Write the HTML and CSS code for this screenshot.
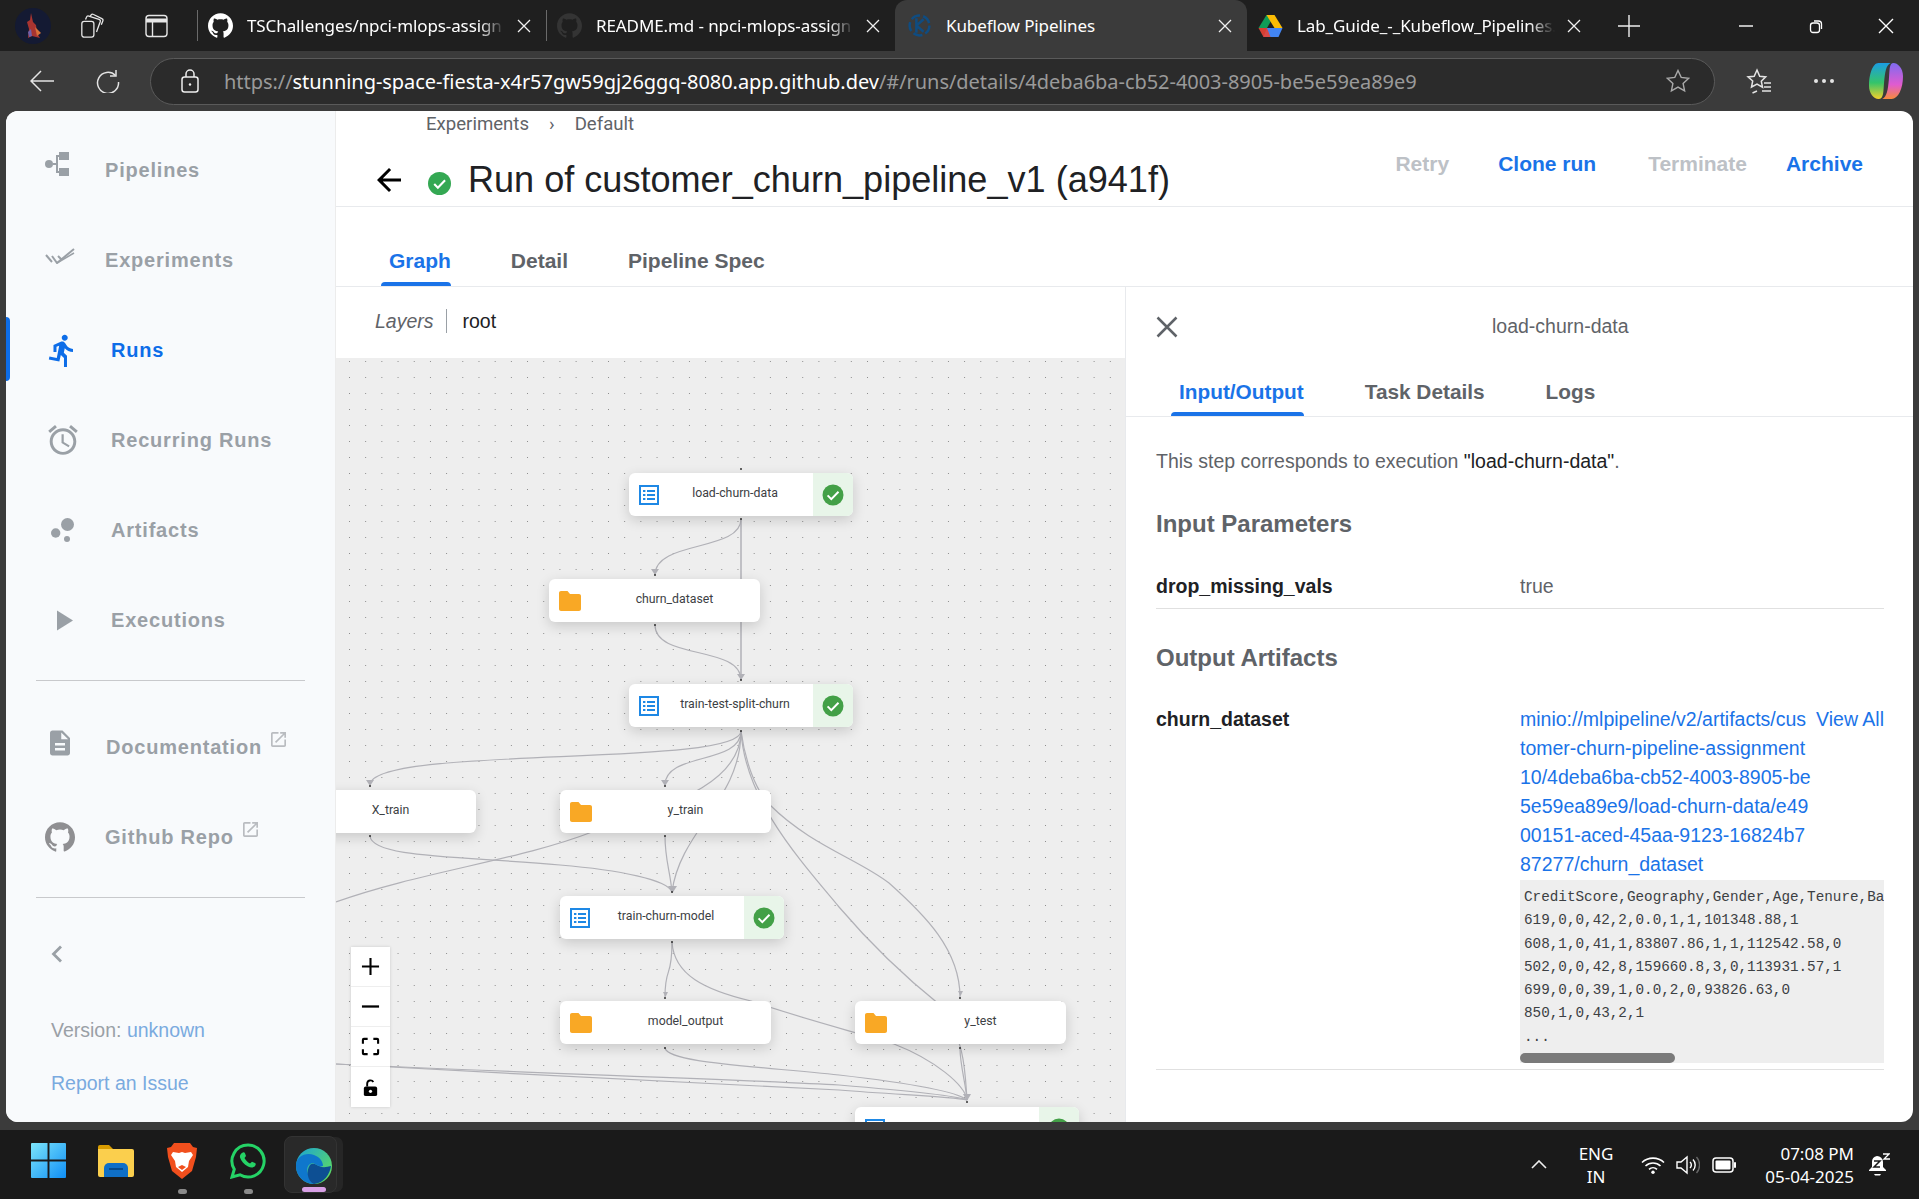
FILE: index.html
```html
<!DOCTYPE html>
<html lang="en">
<head>
<meta charset="utf-8">
<title>Kubeflow Pipelines</title>
<link rel="stylesheet" href="styles.css">
</head>
<body>
<svg class="defs" width="0" height="0" aria-hidden="true">
  <defs>
    <symbol id="i-github" viewBox="0 0 24 24"><path d="M12 .297c-6.63 0-12 5.373-12 12 0 5.303 3.438 9.8 8.205 11.385.6.113.82-.258.82-.577 0-.285-.01-1.04-.015-2.04-3.338.724-4.042-1.61-4.042-1.61C4.422 18.07 3.633 17.7 3.633 17.7c-1.087-.744.084-.729.084-.729 1.205.084 1.838 1.236 1.838 1.236 1.07 1.835 2.809 1.305 3.495.998.108-.776.417-1.305.76-1.605-2.665-.3-5.466-1.332-5.466-5.93 0-1.31.465-2.38 1.235-3.22-.135-.303-.54-1.523.105-3.176 0 0 1.005-.322 3.3 1.23.96-.267 1.98-.399 3-.405 1.02.006 2.04.138 3 .405 2.28-1.552 3.285-1.23 3.285-1.23.645 1.653.24 2.873.12 3.176.765.84 1.23 1.91 1.23 3.22 0 4.61-2.805 5.625-5.475 5.92.42.36.81 1.096.81 2.22 0 1.606-.015 2.896-.015 3.286 0 .315.21.69.825.57C20.565 22.092 24 17.592 24 12.297c0-6.627-5.373-12-12-12"/></symbol>
    <symbol id="i-x" viewBox="0 0 14 14"><path d="M1 1l12 12M13 1L1 13" fill="none" stroke="currentColor" stroke-width="1.3"/></symbol>
    <symbol id="i-ext" viewBox="3 3 18 18"><path d="M19 19H5V5h7V3H5c-1.11 0-2 .9-2 2v14c0 1.1.89 2 2 2h14c1.1 0 2-.9 2-2v-7h-2v7zM14 3v2h3.59l-9.83 9.83 1.41 1.41L19 6.41V10h2V3h-7z"/></symbol>
    <symbol id="i-check" viewBox="0 0 24 24"><circle cx="12" cy="12" r="10.5" fill="#43a047"/><path d="M6.6 12.4l3.7 3.7 7.2-7.4" fill="none" stroke="#fff" stroke-width="2"/></symbol>
    <symbol id="i-list" viewBox="0 0 20 20"><rect width="20" height="20" fill="#1e88e5"/><rect x="2" y="2" width="16" height="16" fill="#fff"/><path d="M4 5h2.4v2H4zM8 5h8v2H8zM4 9h2.4v2H4zM8 9h8v2H8zM4 13h2.4v2H4zM8 13h8v2H8z" fill="#1e88e5"/></symbol>
    <symbol id="i-folder" viewBox="0 0 22 20"><path d="M8.5 0H2C.9 0 0 .9 0 2v16c0 1.1.9 2 2 2h18c1.1 0 2-.9 2-2V5c0-1.1-.9-2-2-2h-9z" fill="#f9a825"/></symbol>
  </defs>
</svg>

<header class="tabstrip">
  <svg class="avatar" viewBox="0 0 36 36"><circle cx="18" cy="18" r="18" fill="#141a33"/><path d="M16 5l2 9 3 3 1 8 3 5-8-2-4 2 1-9-2-7 3-2z" fill="#a83430"/><path d="M20 19l6 6-4 3z" fill="#d8703a"/><path d="M13 24l3-3 1 7-3 1z" fill="#6f5fa8"/></svg>
  <svg class="tool workspaces" viewBox="0 0 25 28" fill="none" stroke="#e6e6e6" stroke-width="1.4"><rect x="1" y="9" width="13" height="17" rx="2.5"/><path d="M5 7l1-2.5a2 2 0 0 1 2.5-1.2l11 3.6a2 2 0 0 1 1.3 2.5l-4 11"/><path d="M10 3.5l1-1.4a2 2 0 0 1 2.6-.5l9 4.5a2 2 0 0 1 1 2.6l-1.6 4"/></svg>
  <svg class="tool vtabs" viewBox="0 0 23 24" fill="none" stroke="#e6e6e6" stroke-width="1.4"><rect x="1" y="1.5" width="21" height="21" rx="3"/><path d="M1 6.5h21" stroke-width="4"/><path d="M7.5 8v14"/></svg>
  <div class="tab tab-first">
    <svg class="tab-ico ico-white"><use href="#i-github"/></svg>
    <span class="tab-title">TSChallenges/npci-mlops-assign</span>
    <svg class="tab-x"><use href="#i-x"/></svg>
  </div>
  <div class="tab">
    <svg class="tab-ico ico-dim"><use href="#i-github"/></svg>
    <span class="tab-title">README.md - npci-mlops-assign</span>
    <svg class="tab-x"><use href="#i-x"/></svg>
  </div>
  <div class="tab tab-active">
    <svg class="tab-ico" viewBox="0 0 24 24" fill="none" stroke="#0f4c81" stroke-width="2.400"><circle cx="12" cy="12" r="9.500" stroke-dasharray="9 3"/><path d="M9 5v14M9 12l7-6M9 12l7 6"/></svg>
    <span class="tab-title tab-title-plain">Kubeflow Pipelines</span>
    <svg class="tab-x"><use href="#i-x"/></svg>
  </div>
  <div class="tab">
    <svg class="tab-ico drive" viewBox="0 0 24 22"><path d="M8 0h8L8.5 13H0z" fill="#0f9d58"/><path d="M8 0h8l8 13h-8z" fill="#fbbc04"/><path d="M5 22l3.5-9H24l-4 9z" fill="#4285f4"/><path d="M0 13h8.5L12 22H5z" fill="#ea4335" opacity=".9"/></svg>
    <span class="tab-title">Lab_Guide_-_Kubeflow_Pipelines.</span>
    <svg class="tab-x"><use href="#i-x"/></svg>
  </div>
  <svg class="newtab" viewBox="0 0 22 22"><path d="M11 0v22M0 11h22" stroke="#eee" stroke-width="1.4"/></svg>
  <div class="winctl">
    <svg viewBox="0 0 16 16"><path d="M1 8h14" stroke="#fff" stroke-width="1.4"/></svg>
    <svg viewBox="0 0 16 16" fill="none" stroke="#fff" stroke-width="1.3"><rect x="2.5" y="5" width="9" height="9.5" rx="2.5"/><path d="M6 3h4.5a3 3 0 0 1 3 3v5"/></svg>
    <svg viewBox="0 0 16 16"><path d="M1 1l14 14M15 1L1 15" stroke="#fff" stroke-width="1.4"/></svg>
  </div>
</header>

<nav class="toolbar">
  <svg class="tb-back" viewBox="0 0 24 22" fill="none" stroke="#e4e4e4" stroke-width="1.5"><path d="M24 11H1M11 1L1 11l10 10"/></svg>
  <svg class="tb-reload" viewBox="0 0 24 24" fill="none" stroke="#e4e4e4" stroke-width="1.5"><path d="M19.5 6.5A10.5 10.5 0 1 0 22.5 13"/><path d="M20 1v6h-6"/></svg>
  <div class="urlbar">
    <svg class="lock" viewBox="0 0 18 24" fill="none" stroke="#eee" stroke-width="1.5"><rect x="1" y="8" width="16" height="15" rx="2.5"/><path d="M5 8V5a4 4 0 0 1 8 0v3"/><circle cx="9" cy="15.5" r="1.2" fill="#eee" stroke="none"/></svg>
    <span class="url"><span class="url-dim">https://</span><span class="url-host">stunning-space-fiesta-x4r57gw59gj26ggq-8080.app.github.dev</span><span class="url-dim">/#/runs/details/4deba6ba-cb52-4003-8905-be5e59ea89e9</span></span>
    <svg class="star" viewBox="0 0 24 24" fill="none" stroke="#aaa" stroke-width="1.4"><path d="M12 1.5l3.2 6.9 7.5.9-5.6 5.1 1.5 7.4L12 18.1l-6.6 3.7 1.5-7.4L1.3 9.3l7.5-.9z"/></svg>
  </div>
  <svg class="tb-fav" viewBox="0 0 26 26" fill="none" stroke="#e4e4e4" stroke-width="1.5"><path d="M11 2l2.7 6.2 6 .7-4.4 4.3 1.2 6-5.5-3.2L5.500 19l1.200-6L2 8.900l6.200-.7zM11 23l-4.500 2"/><path d="M18 15h7M18 19h7M16 23h9"/></svg>
  <div class="tb-dots"><i></i><i></i><i></i></div>
  <svg class="copilot" viewBox="0 0 36 40">
    <defs><linearGradient id="cpa" x1="0" y1="0" x2="0" y2="1"><stop offset="0" stop-color="#1b9de2"/><stop offset=".55" stop-color="#35c46a"/><stop offset="1" stop-color="#f4d02b"/></linearGradient><linearGradient id="cpb" x1="0" y1="0" x2="0" y2="1"><stop offset="0" stop-color="#7f6bf0"/><stop offset=".6" stop-color="#e05bd0"/><stop offset="1" stop-color="#f78a3c"/></linearGradient></defs>
    <path d="M26 1c4 0 10 5 10 14 0 13-5 24-12 24H14c5-2 6-10 7-20 1-10 0-18 5-18z" fill="url(#cpb)"/>
    <path d="M10 1h13c-5 2-6 10-7 20-1 10 0 18-6 18C5 39 0 33 0 25 0 13 4 1 10 1z" fill="url(#cpa)"/>
  </svg>
</nav>

<div class="viewport">
  <aside class="sidebar">
    <a class="nav nav-a">
      <svg class="ni ni-pipe" viewBox="0 0 24 24"><circle cx="4" cy="12" r="4"/><path d="M14 0h10v8H14zM14 16h10v8H14zM8 11h3V3h3v2h-1v6h0v2h0v6h1v2h-3v-8H8z"/></svg>
      <span>Pipelines</span>
    </a>
    <a class="nav nav-a">
      <svg class="ni ni-exp" viewBox="0 0 30 16" fill="none" stroke="currentColor" stroke-width="2"><path d="M1 7l6 7M7 8l5 7L29 1M13 8l3 3"/><path d="M12 15L29 5" stroke-width="1.5"/></svg>
      <span>Experiments</span>
    </a>
    <a class="nav nav-b nav-active">
      <svg class="ni ni-run" viewBox="3 1 16 22"><path d="M13.49 5.48c1.1 0 2-.9 2-2s-.9-2-2-2-2 .9-2 2 .9 2 2 2zm-3.600 13.900l1-4.400 2.100 2v6h2v-7.500l-2.100-2 .6-3c1.300 1.500 3.300 2.500 5.500 2.500v-2c-1.900 0-3.500-1-4.300-2.400l-1-1.600c-.4-.6-1-1-1.700-1-.3 0-.5.1-.8.1l-5.200 2.200v4.700h2v-3.400l1.800-.7-1.600 8.100-4.900-1-.4 2 7 1.400z"/></svg>
      <span>Runs</span>
    </a>
    <a class="nav nav-b">
      <svg class="ni ni-alarm" viewBox="2 1.800 20 20.300"><path d="M22 5.720l-4.600-3.860-1.290 1.530 4.600 3.860L22 5.720zM7.880 3.390L6.600 1.860 2 5.710l1.290 1.530 4.590-3.850zM12.500 8H11v6l4.750 2.850.75-1.230-4-2.370V8zM12 4c-4.970 0-9 4.030-9 9s4.020 9 9 9c4.970 0 9-4.030 9-9s-4.030-9-9-9zm0 16c-3.870 0-7-3.130-7-7s3.130-7 7-7 7 3.130 7 7-3.130 7-7 7z"/></svg>
      <span>Recurring Runs</span>
    </a>
    <a class="nav nav-b">
      <svg class="ni ni-art" viewBox="0 0 24 24"><circle cx="16.500" cy="6.500" r="6.500"/><circle cx="4.700" cy="15" r="4.700"/><circle cx="16" cy="21" r="3"/></svg>
      <span>Artifacts</span>
    </a>
    <a class="nav nav-b">
      <svg class="ni ni-exec" viewBox="0 0 16 20"><path d="M0 0l16 10L0 20z"/></svg>
      <span>Executions</span>
    </a>
    <hr class="side-rule">
    <a class="nav nav-a nav-doc">
      <svg class="ni ni-doc" viewBox="4 2 16 20"><path d="M14 2H6c-1.100 0-1.990.9-1.990 2L4 20c0 1.100.89 2 1.990 2H18c1.100 0 2-.9 2-2V8l-6-6zm2 16H8v-2h8v2zm0-4H8v-2h8v2zm-3-5V3.500L18.500 9H13z"/></svg>
      <span>Documentation</span>
      <svg class="ext"><use href="#i-ext"/></svg>
    </a>
    <a class="nav nav-a">
      <svg class="ni ni-gh"><use href="#i-github"/></svg>
      <span>Github Repo</span>
      <svg class="ext"><use href="#i-ext"/></svg>
    </a>
    <hr class="side-rule side-rule-2">
    <svg class="collapse" viewBox="0 0 11 18" fill="none" stroke="#9aa0a6" stroke-width="2.800"><path d="M10 1.500L2.500 9l7.500 7.500"/></svg>
    <p class="version">Version: <a>unknown</a></p>
    <p class="report"><a>Report an Issue</a></p>
  </aside>

  <main class="main">
    <div class="crumbs"><span>Experiments</span><span class="crumb-sep">›</span><span>Default</span></div>
    <div class="titlebar">
      <svg class="back" viewBox="0 0 24 24"><path d="M20 11H7.830l5.590-5.590L12 4l-8 8 8 8 1.410-1.410L7.830 13H20v-2z"/></svg>
      <svg class="title-check" viewBox="0 0 24 24"><circle cx="12" cy="12" r="12" fill="#34a853"/><path d="M6.500 12.500l3.800 3.800 7.500-7.800" fill="none" stroke="#fff" stroke-width="2.200"/></svg>
      <h1>Run of customer_churn_pipeline_v1 (a941f)</h1>
      <div class="actions">
        <button class="act act-off act-retry">Retry</button>
        <button class="act act-on act-clone">Clone run</button>
        <button class="act act-off act-term">Terminate</button>
        <button class="act act-on act-arch">Archive</button>
      </div>
    </div>
    <div class="tabs tabs-main">
      <span class="t t-on">Graph</span>
      <span class="t">Detail</span>
      <span class="t">Pipeline Spec</span>
    </div>
    <div class="panes">
      <section class="left">
        <div class="layers"><em>Layers</em><i class="layers-sep"></i><span>root</span></div>
        <div class="canvas">
          <svg class="edges" viewBox="336 358 789 764" fill="none" stroke="#b1b1b7" stroke-width="1.200">
            <path d="M741 519V680" stroke-width="1.500"/>
            <path d="M741 519C741 552 655 540 655 575"/>
            <path d="M655 625C655 660 741 645 741 680"/>
            <path d="M741 731C741 768 370 745 370 785"/>
            <path d="M741 731C741 765 665 752 665 785"/>
            <path d="M741 731C741 790 650 810 592 832C520 860 420 872 336 902"/>
            <path d="M741 731C741 800 680 830 672 892"/>
            <path d="M665 836C665 860 670 870 672 892"/>
            <path d="M370 836C372 858 460 856 560 865C620 870 668 880 672 892"/>
            <path d="M741 731C745 800 800 860 839 907C880 955 915 985 940 1005C965 1040 965 1070 967 1100"/>
            <path d="M741 731C745 760 755 790 770 805C810 845 860 860 889 883C925 915 960 950 960 997"/>
            <path d="M672 942C672 980 665 965 665 997"/>
            <path d="M672 942C674 975 705 990 751 1001C800 1018 855 1032 894 1044C935 1060 965 1085 967 1100"/>
            <path d="M665 1048C668 1062 740 1065 839 1075C900 1082 955 1090 967 1100"/>
            <path d="M960 1048C960 1065 966 1085 967 1100"/>
            <path d="M336 1064C500 1072 760 1080 839 1085C900 1090 955 1095 967 1100"/>
            <path d="M336 1064C500 1074 760 1085 839 1090C900 1095 950 1096 967 1100"/>
            <g class="arrows" fill="#b1b1b7" stroke="none">
              <path d="M737 674h8l-4 6z"/><path d="M651 569h8l-4 6z"/><path d="M366 780h8l-4 6z"/><path d="M661 780h8l-4 6z"/><path d="M668 886h9l-4.500 7z"/><path d="M663 992h5l-2.500 5z"/><path d="M958 991h5l-2.500 5z"/><path d="M963 1094h8l-4 7z"/>
            </g>
            <g class="ends" fill="#333" stroke="none">
              <circle cx="741" cy="469" r="1"/><circle cx="741" cy="519" r="1"/><circle cx="655" cy="575" r="1"/><circle cx="655" cy="625" r="1"/><circle cx="741" cy="680" r="1"/><circle cx="741" cy="731" r="1"/><circle cx="370" cy="786" r="1"/><circle cx="665" cy="786" r="1"/><circle cx="370" cy="836" r="1"/><circle cx="665" cy="836" r="1"/><circle cx="672" cy="892" r="1"/><circle cx="672" cy="942" r="1"/><circle cx="665" cy="998" r="1"/><circle cx="960" cy="998" r="1"/><circle cx="665" cy="1048" r="1"/><circle cx="960" cy="1048" r="1"/><circle cx="967" cy="1102" r="1"/>
            </g>
          </svg>

          <div class="node exec n-load"><svg class="nico"><use href="#i-list"/></svg><span class="nlabel">load-churn-data</span><span class="nstat"><svg><use href="#i-check"/></svg></span></div>
          <div class="node art n-dataset"><svg class="nico"><use href="#i-folder"/></svg><span class="nlabel">churn_dataset</span></div>
          <div class="node exec n-split"><svg class="nico"><use href="#i-list"/></svg><span class="nlabel">train-test-split-churn</span><span class="nstat"><svg><use href="#i-check"/></svg></span></div>
          <div class="node art n-xtrain"><svg class="nico"><use href="#i-folder"/></svg><span class="nlabel">X_train</span></div>
          <div class="node art n-ytrain"><svg class="nico"><use href="#i-folder"/></svg><span class="nlabel">y_train</span></div>
          <div class="node exec n-train"><svg class="nico"><use href="#i-list"/></svg><span class="nlabel">train-churn-model</span><span class="nstat"><svg><use href="#i-check"/></svg></span></div>
          <div class="node art n-model"><svg class="nico"><use href="#i-folder"/></svg><span class="nlabel">model_output</span></div>
          <div class="node art n-ytest"><svg class="nico"><use href="#i-folder"/></svg><span class="nlabel">y_test</span></div>
          <div class="node exec n-last"><svg class="nico"><use href="#i-list"/></svg><span class="nlabel"></span><span class="nstat"><svg><use href="#i-check"/></svg></span></div>

          <div class="zoomctl">
            <button><svg viewBox="0 0 20 20"><path d="M10 1v18M1 10h18" stroke="#000" stroke-width="2.200"/></svg></button>
            <button><svg viewBox="0 0 20 20"><path d="M1 10h18" stroke="#000" stroke-width="2.400"/></svg></button>
            <button><svg viewBox="0 0 20 20" fill="none" stroke="#000" stroke-width="2.200"><path d="M2 7V3a1 1 0 0 1 1-1h4M13 2h4a1 1 0 0 1 1 1v4M18 13v4a1 1 0 0 1-1 1h-4M7 18H3a1 1 0 0 1-1-1v-4"/></svg></button>
            <button><svg viewBox="0 0 20 20"><path d="M5 9h10a2 2 0 0 1 2 2v6a2 2 0 0 1-2 2H5a2 2 0 0 1-2-2v-6a2 2 0 0 1 2-2z"/><path d="M6.500 9V6a3.500 3.500 0 0 1 6.500-1.800" fill="none" stroke="#000" stroke-width="2"/><circle cx="10" cy="14" r="1.700" fill="#fff"/></svg></button>
          </div>
        </div>
      </section>

      <section class="side">
        <div class="side-head">
          <svg class="side-close" viewBox="0 0 22 22"><path d="M1.500 1.500l19 19M20.500 1.500l-19 19" stroke="#5f6368" stroke-width="2.500"/></svg>
          <span class="side-title">load-churn-data</span>
        </div>
        <div class="tabs tabs-side">
          <span class="t t-on">Input/Output</span>
          <span class="t">Task Details</span>
          <span class="t">Logs</span>
        </div>
        <div class="side-body">
          <p class="lead">This step corresponds to execution <b>"load-churn-data"</b>.</p>
          <h2 class="h-in">Input Parameters</h2>
          <div class="kv kv-in"><strong>drop_missing_vals</strong><span class="v">true</span></div>
          <h2 class="h-out">Output Artifacts</h2>
          <div class="kv kv-out">
            <strong>churn_dataset</strong>
            <div class="artifact">
              <div class="link-row">
                <a class="uri">minio://mlpipeline/v2/artifacts/cus<br>tomer-churn-pipeline-assignment<br>10/4deba6ba-cb52-4003-8905-be<br>5e59ea89e9/load-churn-data/e49<br>00151-aced-45aa-9123-16824b7<br>87277/churn_dataset</a>
                <a class="viewall">View All</a>
              </div>
              <div class="preview">
                <pre>CreditScore,Geography,Gender,Age,Tenure,Ba
619,0,0,42,2,0.0,1,1,101348.88,1
608,1,0,41,1,83807.86,1,1,112542.58,0
502,0,0,42,8,159660.8,3,0,113931.57,1
699,0,0,39,1,0.0,2,0,93826.63,0
850,1,0,43,2,1
...</pre>
                <i class="thumb"></i>
              </div>
            </div>
          </div>
        </div>
      </section>
    </div>
  </main>
</div>

<footer class="taskbar">
  <svg class="tk tk-win" viewBox="0 0 36 36">
    <defs><linearGradient id="wg" x1="0" y1="0" x2="1" y2="1"><stop offset="0" stop-color="#7ce6fb"/><stop offset="1" stop-color="#0f8ef5"/></linearGradient></defs>
    <path d="M1 0h16v17H0V1a1 1 0 0 1 1-1zM19 0h16a1 1 0 0 1 1 1v16H19zM0 19h17v17H1a1 1 0 0 1-1-1zM19 19h17v16a1 1 0 0 1-1 1H19z" fill="url(#wg)"/>
  </svg>
  <svg class="tk tk-folder" viewBox="0 0 36 32">
    <path d="M0 2a2 2 0 0 1 2-2h9l4 4h-15z" fill="#d99c00"/><path d="M0 4h34a2 2 0 0 1 2 2v24a2 2 0 0 1-2 2H2a2 2 0 0 1-2-2z" fill="#fbcf4d"/><path d="M6 32V23a5 5 0 0 1 5-5h14a5 5 0 0 1 5 5v9z" fill="#0f6fc6"/><path d="M11 24h14" stroke="#063f77" stroke-width="1.500"/>
  </svg>
  <span class="tk-slot tk-brave">
    <svg viewBox="0 0 30 36"><path d="M7 0h16l3 4 4 1-1 9-4 14-10 8-10-8L1 14 0 5l4-1z" fill="#f14f1d"/><path d="M6 9l6 1 3-1 3 1 6-1 2 3-4 6-1 6-6 5-6-5-1-6-4-6z" fill="#fff"/><path d="M11 24l4-2 4 2-4 3z" fill="#f14f1d"/></svg>
    <i class="pip"></i>
  </span>
  <span class="tk-slot tk-wa">
    <svg viewBox="0 0 36 36"><path d="M18 2a16 16 0 1 1-8 29.800L2 34l2.300-7.700A16 16 0 0 1 18 2z" fill="none" stroke="#25d366" stroke-width="3"/><path d="M12 10c1-1 2.500-1 3 .2l1 2.800-1.500 2c1 2.200 3 4.200 5.500 5.500l2-1.800 3 1.300c1 .5 1 2 0 3-1.500 1.800-4 2-7 .5-4-2-7-5.500-8-9-.4-1.800.5-3.500 2-4.500z" fill="#25d366"/></svg>
    <i class="pip"></i>
  </span>
  <span class="tk-edge">
    <svg viewBox="0 0 36 36">
      <defs><linearGradient id="eg" x1="0" y1="0" x2="1" y2=".8"><stop offset="0" stop-color="#1aa3d6"/><stop offset="1" stop-color="#5fdd5f"/></linearGradient></defs>
      <circle cx="18" cy="18" r="18" fill="url(#eg)"/>
      <path d="M0 18C0 8 10 4 18 7c6 2 9 7 9 11-4 0-8-5-13-2-5 3-3 12 3 17 1 1 3 2 1 3C8 36 0 28 0 18z" fill="#0f77cc"/>
      <path d="M14 17c3-3 7 0 9 1 4 2 8 1 12 0-1 8-7 17-17 18-7-3-8-14-4-19z" fill="#0d4f93"/>
      <path d="M13 15c4-4 10-3 13 1 1 2 0 3-3 2-3-1-7-5-10-3z" fill="#0f77cc"/>
    </svg>
    <i class="pip-on"></i>
  </span>
  <div class="tray">
    <svg class="tray-up" viewBox="0 0 16 9" fill="none" stroke="#eee" stroke-width="1.600"><path d="M1 8l7-7 7 7"/></svg>
    <div class="lang"><span>ENG</span><span>IN</span></div>
    <svg class="tray-wifi" viewBox="0 0 24 18" fill="none" stroke="#fff" stroke-width="1.600"><path d="M1 6.500a16 16 0 0 1 22 0M4.500 10a11 11 0 0 1 15 0M8 13.300a6 6 0 0 1 8 0"/><circle cx="12" cy="16.300" r="1.700" fill="#fff" stroke="none"/></svg>
    <svg class="tray-vol" viewBox="0 0 24 20" fill="none" stroke="#fff" stroke-width="1.400"><path d="M1 7v6h4l6 5V2L5 7z"/><path d="M14 7a4 4 0 0 1 0 6M17 4.500a8 8 0 0 1 0 11"/><path d="M20.500 2a12 12 0 0 1 0 16" stroke="#666"/></svg>
    <svg class="tray-bat" viewBox="0 0 24 16"><rect x="1" y="1" width="20" height="14" rx="3" fill="none" stroke="#fff" stroke-width="1.500"/><rect x="3.500" y="3.500" width="15" height="9" rx="1" fill="#fff"/><rect x="22" y="5" width="2" height="6" rx="1" fill="#fff"/></svg>
    <div class="clock"><span>07:08 PM</span><span>05-04-2025</span></div>
    <svg class="tray-bell" viewBox="0 0 22 24"><path d="M9 3a6 6 0 0 0-5 6v5l-3 3v1h17v-1l-3-3V9a6 6 0 0 0-6-6z" fill="#fff"/><path d="M6 21h7l-1 1.500H7z" fill="#fff"/><path d="M6 8h6l-6 6h6" fill="none" stroke="#1a1a1a" stroke-width="1.500"/><path d="M15 1h6l-5 5h6" fill="none" stroke="#fff" stroke-width="1.300"/></svg>
  </div>
</footer>
</body>
</html>
```

FILE: styles.css
```css
* { box-sizing: border-box; }
html, body { margin: 0; padding: 0; }
body {
  width: 1919px;
  height: 1199px;
  overflow: hidden;
  background: #3b3b3b;
  font-family: "Liberation Sans", Arial, sans-serif;
  color: #202124;
}
svg { display: block; flex: none; }
.defs { position: absolute; }

/* Browser tab strip */
.tabstrip {
  height: 51px;
  background: #1f1f1f;
  display: flex;
  align-items: center;
  color: #fff;
  font-family: "Noto Sans", sans-serif;
}
.avatar { width: 36px; height: 36px; margin-left: 15px; }
.tool { height: 26px; }
.workspaces { width: 25px; margin-left: 29px; }
.vtabs { width: 23px; height: 24px; margin-left: 40px; }
.tab {
  width: 349px;
  height: 51px;
  display: flex;
  align-items: center;
  padding: 0 15px 0 11px;
  position: relative;
}
.tab::before {
  content: "";
  position: absolute;
  left: 0;
  top: 10px;
  bottom: 10px;
  width: 1px;
  background: #6a6a6a;
}
.tab-first { margin-left: 29px; }
.tab-active {
  width: 352px;
  background: #3b3b3b;
  border-radius: 12px 12px 0 0;
  padding-left: 12px;
}
.tab-active::before, .tab-active + .tab::before { display: none; }
.tab-ico { width: 25px; height: 25px; flex: none; }
.ico-white { fill: #fff; }
.ico-dim { fill: #343434; }
.drive { height: 22px; }
.tab-title {
  flex: 1;
  min-width: 0;
  margin-left: 14px;
  white-space: nowrap;
  font-size: 17px;
  letter-spacing: -.1px;
  -webkit-mask-image: linear-gradient(to right, #000 90%, transparent 100%);
  mask-image: linear-gradient(to right, #000 90%, transparent 100%);
}
.tab-title-plain { -webkit-mask-image: none; mask-image: none; }
.tab-x { width: 14px; height: 14px; margin-left: 12px; color: #f0f0f0; }
.newtab { width: 22px; height: 22px; margin-left: 22px; }
.winctl { display: flex; align-items: center; gap: 54px; margin-left: auto; padding-right: 25px; }
.winctl svg { width: 16px; height: 16px; }

/* Browser toolbar */
.toolbar { height: 60px; display: flex; align-items: center; }
.tb-back { width: 24px; height: 22px; margin-left: 30px; }
.tb-reload { width: 24px; height: 24px; margin-left: 42px; }
.urlbar {
  width: 1565px;
  height: 47px;
  margin-left: 30px;
  border: 1.500px solid #5a5a5a;
  border-radius: 24px;
  background: #2b2b2b;
  display: flex;
  align-items: center;
  padding: 0 24px 0 30px;
}
.lock { width: 18px; height: 24px; }
.url { margin-left: 25px; font: 20px "Noto Sans", sans-serif; letter-spacing: -.043px; white-space: nowrap; flex: 1; }
.url-dim { color: #9a9a9a; }
.url-host { color: #fff; }
.star { width: 24px; height: 24px; }
.tb-fav { width: 26px; height: 26px; margin-left: 31px; }
.tb-dots { display: flex; gap: 4px; margin-left: 42px; }
.tb-dots i { width: 4px; height: 4px; border-radius: 50%; background: #e4e4e4; }
.copilot { width: 34px; height: 38px; margin-left: 35px; }

/* Page viewport */
.viewport {
  height: 1011px;
  margin: 0 6px;
  border-radius: 12px;
  overflow: hidden;
  background: #fff;
  display: flex;
}

/* Left nav */
.sidebar {
  width: 330px;
  flex: none;
  height: 100%;
  background: #f8fafc;
  border-right: 1px solid #ececec;
  padding-top: 14px;
  color: #9aa0a6;
}
.nav {
  height: 90px;
  display: flex;
  align-items: center;
  font-size: 20px;
  font-weight: 700;
  letter-spacing: .8px;
  color: #9aa0a6;
  position: relative;
}
.nav .ni { fill: currentColor; }
.nav-a { padding-left: 39px; }
.nav-b { padding-left: 42px; }
.ni-pipe { width: 24px; height: 24px; margin: -12px 36px 0 0; }
.ni-exp { width: 30px; height: 16px; margin: -8px 30px 0 0; fill: none !important; }
.ni-run { width: 26px; height: 33px; margin: 0 37px 0 0; }
.ni-alarm { width: 30px; height: 30px; margin: 0 33px 0 0; }
.ni-art { width: 24px; height: 24px; margin: 0 36px 0 3px; }
.ni-exec { width: 16px; height: 21px; margin: 0 38px 0 9px; }
.nav-active { color: #0d6de8; }
.nav-active::before {
  content: "";
  position: absolute;
  left: 0;
  top: 12px;
  width: 4px;
  height: 64px;
  background: #0d6de8;
  border-radius: 0 4px 4px 0;
}
.side-rule { width: 269px; height: 1px; margin: 15px 0 0 30px; border: 0; background: #c8c9cc; }
.nav-doc { margin-top: 21px; }
.ni-doc { width: 20px; height: 26px; margin: -8px 36px 0 5px; }
.ni-gh { width: 30px; height: 30px; margin-right: 30px; fill: #8f8f92 !important; }
.ext { width: 15px; height: 15px; margin: -16px 0 0 9px; fill: #b9bcc0; }
.side-rule-2 { margin-top: 15px; }
.collapse { width: 11px; height: 18px; margin: 47px 0 0 45px; }
.version, .report { margin: 0 0 0 45px; font-size: 19.500px; }
.version { margin-top: 56px; color: #9aa0a6; }
.report { margin-top: 30px; }
.version a, .report a { color: #7aaadf; }

/* Main column */
.main { flex: 1; min-width: 0; display: flex; flex-direction: column; }
.crumbs {
  height: 26px;
  display: flex;
  align-items: center;
  padding-left: 90px;
  font: 18.600px "Roboto", sans-serif;
  color: #5f6368;
}
.crumb-sep { margin: 0 20px 0 20px; }
.titlebar {
  height: 70px;
  display: flex;
  align-items: center;
  border-bottom: 1px solid #e8eaed;
  padding: 17px 0 0 35px;
}
.back { width: 36px; height: 36px; }
.title-check { width: 23px; height: 23px; margin: 6px 0 0 21px; }
h1 { margin: 0 0 0 17px; font-size: 36.100px; font-weight: 400; color: #202124; white-space: nowrap; }
.actions { display: flex; margin: -32px 0 0 auto; }
button { font-family: inherit; border: 0; background: none; padding: 0; }
.act { font-size: 21px; font-weight: 700; }
.act-off { color: #bdc1c6; }
.act-on { color: #1a73e8; }
.act-retry { margin-right: 49px; }
.act-clone { margin-right: 52px; }
.act-term { margin-right: 39px; }
.act-arch { margin-right: 50px; }

.tabs {
  display: flex;
  border-bottom: 1px solid #e8eaed;
  font-size: 21px;
  font-weight: 700;
  color: #5f6368;
  flex: none;
}
.tabs-main { height: 80px; padding: 42px 0 0 53px; gap: 60px; }
.t { position: relative; white-space: nowrap; height: 100%; }
.t-on { color: #1a73e8; }
.t-on::after {
  content: "";
  position: absolute;
  height: 4px;
  left: -8px;
  right: 0;
  bottom: 0;
  background: #1a73e8;
  border-radius: 4px 4px 0 0;
}
.panes { flex: 1; min-height: 0; display: flex; }
.left { width: 789px; flex: none; display: flex; flex-direction: column; }
.layers {
  height: 71px;
  flex: none;
  display: flex;
  align-items: center;
  padding: 0 0 3px 39px;
  font-size: 19.500px;
}
.layers em { color: #5f6368; }
.layers-sep { width: 1px; height: 24px; background: #9aa0a6; margin: 0 16px 0 12px; }

/* Graph canvas */
.canvas {
  flex: 1;
  min-height: 0;
  position: relative;
  overflow: hidden;
  background-color: #eeeeee;
  background-image: radial-gradient(circle at .5px .5px, #8a8a8a .5px, transparent .6px);
  background-size: 16.200px 16px;
  background-position: 13px 3px;
}
.edges { position: absolute; left: 0; top: 0; width: 789px; height: 764px; }
.node {
  position: absolute;
  height: 43px;
  background: #fff;
  border-radius: 6px;
  box-shadow: 0 4px 13px rgba(0,0,0,.16);
  display: flex;
  align-items: center;
  overflow: hidden;
  font: 12.300px "Roboto", sans-serif;
  color: #3c4043;
}
.exec { width: 224px; }
.art { width: 211px; }
.nico { margin-left: 10px; }
.exec .nico { width: 20px; height: 20px; }
.art .nico { width: 22px; height: 20px; }
.nlabel { flex: 1; text-align: center; white-space: nowrap; padding-bottom: 3px; }
.art .nlabel { padding-left: 8px; }
.exec .nlabel { padding-right: 2px; }
.nstat { width: 40px; height: 100%; background: #e8f5e9; display: flex; align-items: center; justify-content: center; }
.nstat svg { width: 24px; height: 24px; }
.n-load { left: 293px; top: 115px; }
.n-dataset { left: 213px; top: 221px; }
.n-split { left: 293px; top: 326px; }
.n-xtrain { left: -71px; top: 432px; }
.n-ytrain { left: 224px; top: 432px; }
.n-train { left: 224px; top: 538px; }
.n-model { left: 224px; top: 643px; }
.n-ytest { left: 519px; top: 643px; }
.n-last { left: 519px; top: 749px; }
.zoomctl {
  position: absolute;
  left: 15px;
  top: 589px;
  width: 39px;
  display: flex;
  flex-direction: column;
  background: #fff;
  box-shadow: 0 0 3px rgba(0,0,0,.15);
}
.zoomctl button {
  height: 40px;
  display: flex;
  align-items: center;
  justify-content: center;
  border-bottom: 1px solid #eee;
}
.zoomctl button:last-child { border-bottom: 0; }
.zoomctl svg { width: 19px; height: 19px; }

/* Side panel */
.side { flex: 1; min-width: 0; border-left: 1px solid #e8eaed; display: flex; flex-direction: column; }
.side-head { height: 58px; display: flex; align-items: center; padding: 0 0 0 30px; position: relative; flex: none; }
.side-close { width: 22px; height: 22px; margin-top: 22px; }
.side-title { position: absolute; left: 366px; top: 28px; font-size: 19.500px; color: #5f6368; white-space: nowrap; }
.tabs-side { height: 72px; padding: 35px 0 0 53px; gap: 61px; font-size: 20.800px; }
.side-body { padding: 0 29px 0 30px; }
.lead { margin: 32px 0 0; font-size: 19.500px; line-height: 24px; color: #5f6368; }
.lead b { font-weight: 400; color: #202124; }
h2 { margin: 0; font-size: 24px; font-weight: 700; color: #5f6368; }
.h-in { margin-top: 37px; }
.kv { display: grid; grid-template-columns: 364px minmax(0, 1fr); border-bottom: 1px solid #e0e0e0; font-size: 19.500px; }
.kv strong { color: #202124; }
.kv-in { margin-top: 36px; padding-bottom: 10px; line-height: 24px; }
.v { color: #5f6368; }
.h-out { margin-top: 35px; }
.kv-out { margin-top: 33px; padding-bottom: 6px; line-height: 29px; }
.artifact { min-width: 0; }
.link-row { display: flex; align-items: flex-start; justify-content: space-between; }
.uri { color: #1a73e8; white-space: nowrap; }
.viewall { color: #1a73e8; white-space: nowrap; flex: none; }
.preview { position: relative; height: 183px; margin-top: 1px; background: #eeeeee; overflow: hidden; }
pre { margin: 0; padding: 6px 4px 4px; font: 14.300px/23.300px "Liberation Mono", monospace; color: #3c4043; }
.thumb { position: absolute; left: 0; bottom: 0; width: 155px; height: 10px; background: #7a7a7a; border-radius: 5px; }

/* Windows taskbar */
.taskbar {
  position: relative;
  height: 69px;
  margin-top: 8px;
  background: #1a1a1a;
  display: flex;
  align-items: center;
}
.tk-win { width: 35px; height: 35px; margin: -8px 0 0 31px; }
.tk-folder { width: 36px; height: 32px; margin: -8px 0 0 32px; }
.tk-slot { position: relative; display: block; margin-top: -8px; }
.tk-brave { width: 30px; height: 36px; margin-left: 33px; }
.tk-wa { width: 36px; height: 36px; margin-left: 33px; }
.pip { position: absolute; left: 50%; bottom: -15px; margin-left: -4px; width: 9px; height: 5px; border-radius: 3px; background: #8a8a8a; }
.tk-edge {
  position: relative;
  width: 53px;
  height: 57px;
  margin: 0 0 0 18px;
  background: #292929;
  border: 1px solid #333;
  border-radius: 8px;
  box-shadow: 7px 0 0 -1px #262626;
  display: flex;
  align-items: flex-start;
  justify-content: flex-start;
  padding: 11px 0 0 11px;
}
.tk-edge svg { width: 36px; height: 36px; }
.pip-on { position: absolute; left: 17px; bottom: 0; width: 24px; height: 5px; border-radius: 3px; background: #d8a0e6; }
.tray { margin-left: auto; display: flex; align-items: center; color: #fff; font-family: "Noto Sans", sans-serif; padding-right: 29px; }
.tray-up { width: 16px; height: 9px; }
.lang { display: flex; flex-direction: column; align-items: center; width: 46px; margin-left: 26px; font-size: 17px; line-height: 23px; }
.tray-wifi { width: 24px; height: 18px; margin-left: 22px; }
.tray-vol { width: 24px; height: 20px; margin-left: 11px; }
.tray-bat { width: 24px; height: 16px; margin-left: 12px; }
.clock { width: 118px; display: flex; flex-direction: column; align-items: flex-end; font-size: 17px; line-height: 23px; }
.tray-bell { width: 22px; height: 24px; margin-left: 14px; }
```
